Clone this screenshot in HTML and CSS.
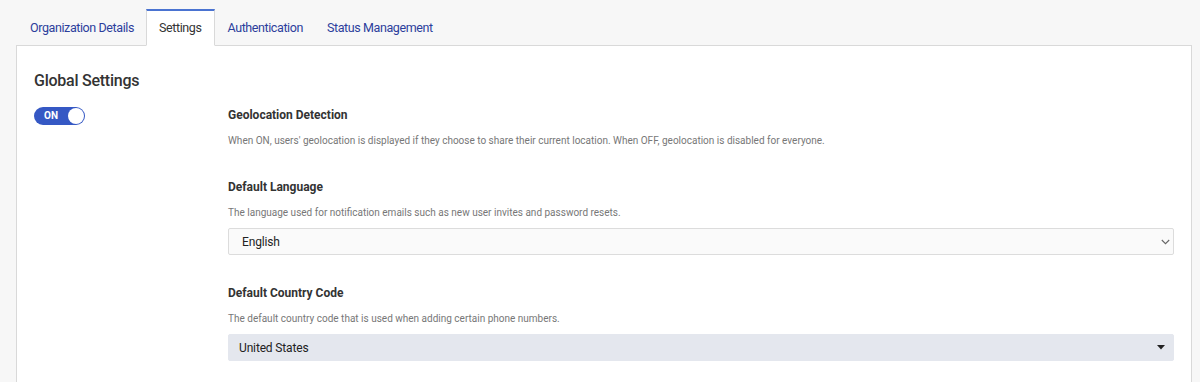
FILE: index.html
```html
<!DOCTYPE html>
<html>
<head>
<meta charset="utf-8">
<link rel="stylesheet" href="styles.css">
</head>
<body>
<div class="page">
  <nav class="tabs">
    <a class="tab">Organization Details</a>
    <a class="tab active">Settings</a>
    <a class="tab">Authentication</a>
    <a class="tab">Status Management</a>
  </nav>
  <section class="panel">
    <h2 class="panel-title">Global Settings</h2>
    <div class="settings">
      <div class="toggle-col">
        <div class="toggle"><span class="toggle-label">ON</span><span class="knob"></span></div>
      </div>
      <div class="fields">
        <div class="field">
          <h3 class="field-title">Geolocation Detection</h3>
          <p class="field-desc">When ON, users' geolocation is displayed if they choose to share their current location. When OFF, geolocation is disabled for everyone.</p>
        </div>
        <div class="field">
          <h3 class="field-title">Default Language</h3>
          <p class="field-desc">The language used for notification emails such as new user invites and password resets.</p>
          <div class="select select-light">
            <span>English</span>
            <svg class="chev" width="9" height="6" viewBox="0 0 9 6"><path d="M0.8 1l3.7 3.7 3.7-3.7" fill="none" stroke="#666" stroke-width="1.1"/></svg>
          </div>
        </div>
        <div class="field">
          <h3 class="field-title">Default Country Code</h3>
          <p class="field-desc">The default country code that is used when adding certain phone numbers.</p>
          <div class="select select-dark">
            <span>United States</span>
            <svg class="caret" width="8" height="5" viewBox="0 0 8 5"><path d="M0 0h8L4 4.5z" fill="#222"/></svg>
          </div>
        </div>
      </div>
    </div>
  </section>
</div>
</body>
</html>
```

FILE: styles.css
```css
* { box-sizing: border-box; }
html, body { margin: 0; padding: 0; }
body {
  background: #f7f7f7;
  font-family: Roboto, "Liberation Sans", Arial, sans-serif;
  color: #333;
}
.page {
  padding: 9px 8px 0 16px;
}
.tabs {
  display: flex;
  padding-left: 2px;
  margin-bottom: -1px;
  position: relative;
  z-index: 1;
}
.tab {
  display: block;
  height: 37px;
  padding: 9px 11px 0 11px;
  font-size: 12.5px;
  letter-spacing: -0.4px;
  color: #2c3e9c;
  border: 1px solid transparent;
  border-top: 2px solid transparent;
  cursor: pointer;
}
.tab.active {
  background: #fff;
  color: #333;
  border-color: #d9d9d9;
  border-top-color: #4a73d1;
  border-bottom-color: #fff;
  padding-left: 12px;
  padding-right: 13px;
}
.panel {
  background: #fff;
  border: 1px solid #d9d9d9;
  padding: 25px 17px 20px 17px;
  min-height: 400px;
}
.panel-title {
  margin: 0;
  font-size: 16px;
  letter-spacing: -0.25px;
  font-weight: 500;
  color: #333;
  line-height: 20px;
}
.settings {
  display: grid;
  grid-template-columns: 194px 1fr;
  margin-top: 15px;
}
.toggle {
  width: 51px;
  height: 18px;
  background: #3558c4;
  border-radius: 9px;
  position: relative;
  margin-top: 1px;
}
.toggle-label {
  position: absolute;
  left: 10px;
  top: 3px;
  font-size: 10px;
  font-weight: 700;
  color: #fff;
  line-height: 12px;
}
.knob {
  position: absolute;
  right: 1px;
  top: 1px;
  width: 16px;
  height: 16px;
  background: #fff;
  border-radius: 50%;
}
.field { margin-bottom: 30px; }
.field-title {
  margin: 0;
  font-size: 12px;
  font-weight: 700;
  line-height: 18px;
  color: #333;
}
.field-desc {
  margin: 10px 0 0 0;
  font-size: 10px;
  line-height: 14px;
  color: #777;
}
.select {
  margin-top: 8px;
  margin-bottom: -1px;
  height: 27px;
  border: 1px solid #dcdcdc;
  border-radius: 2px;
  display: flex;
  align-items: center;
  justify-content: space-between;
  padding: 0 3px 0 13px;
  font-size: 12px;
  letter-spacing: -0.15px;
  color: #222;
}
.select-light { background: #fafafa; }
.select-dark { background: #e4e7ee; border-color: #e4e7ee; padding-left: 10px; padding-right: 8px; }
```
